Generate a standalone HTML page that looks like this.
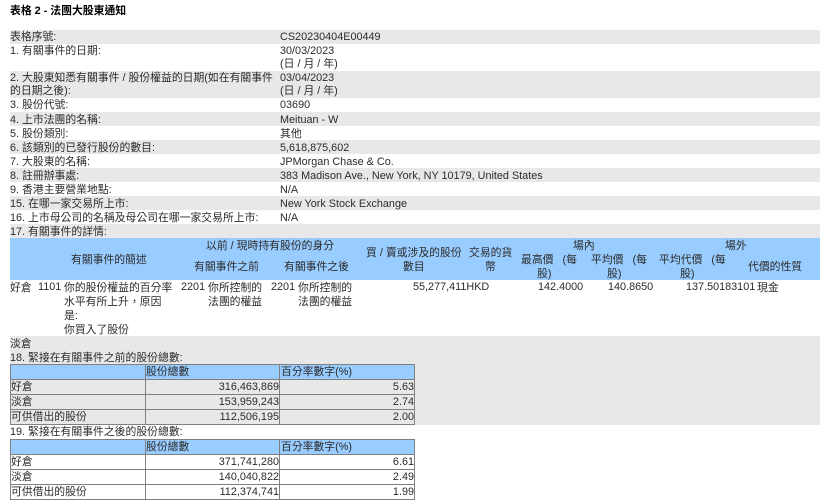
<!DOCTYPE html>
<html><head><meta charset="utf-8"><style>
html,body{margin:0;padding:0;background:#fff;width:827px;height:500px;overflow:hidden}
body{position:relative;font-family:"Liberation Sans","WenQuanYi Zen Hei","Noto Sans CJK TC",sans-serif;font-size:10.83px;color:#2b2b2b}
.t{position:absolute;white-space:nowrap;line-height:14px;height:14px}
.b{position:absolute;left:10px;width:810px}
.g{background:#e8e8e8}.bl{background:#99ccff}
.c{text-align:center}.r{text-align:right}
.l{position:absolute;background:#808080}
.w{word-spacing:6px}
</style></head><body>
<div class="t" style="left:10px;top:4px;font-weight:bold;color:#000">表格 2 - 法團大股東通知</div>

<div class="b g" style="top:30px;height:14px"></div>
<div class="b g" style="top:71px;height:27px"></div>
<div class="b g" style="top:112px;height:14px"></div>
<div class="b g" style="top:140px;height:14px"></div>
<div class="b g" style="top:168px;height:14px"></div>
<div class="b g" style="top:196px;height:14px"></div>
<div class="b g" style="top:224px;height:14px"></div>
<div class="b bl" style="top:238px;height:42px"></div>
<div class="b g" style="top:336px;height:89px"></div>

<div class="t" style="left:10px;top:30px">表格序號:</div><div class="t" style="left:280px;top:30px">CS20230404E00449</div>
<div class="t" style="left:10px;top:44px">1. 有關事件的日期:</div><div class="t" style="left:280px;top:44px">30/03/2023</div>
<div class="t" style="left:280px;top:57px">(日 / 月 / 年)</div>
<div class="t" style="left:10px;top:71px">2. 大股東知悉有關事件 / 股份權益的日期(如在有關事件</div><div class="t" style="left:280px;top:71px">03/04/2023</div>
<div class="t" style="left:10px;top:84px">的日期之後):</div><div class="t" style="left:280px;top:84px">(日 / 月 / 年)</div>
<div class="t" style="left:10px;top:98px">3. 股份代號:</div><div class="t" style="left:280px;top:98px">03690</div>
<div class="t" style="left:10px;top:113px">4. 上市法團的名稱:</div><div class="t" style="left:280px;top:113px">Meituan - W</div>
<div class="t" style="left:10px;top:127px">5. 股份類別:</div><div class="t" style="left:280px;top:127px">其他</div>
<div class="t" style="left:10px;top:141px">6. 該類別的已發行股份的數目:</div><div class="t" style="left:280px;top:141px">5,618,875,602</div>
<div class="t" style="left:10px;top:155px">7. 大股東的名稱:</div><div class="t" style="left:280px;top:155px">JPMorgan Chase &amp; Co.</div>
<div class="t" style="left:10px;top:169px">8. 註冊辦事處:</div><div class="t" style="left:280px;top:169px">383 Madison Ave., New York, NY 10179, United States</div>
<div class="t" style="left:10px;top:183px">9. 香港主要營業地點:</div><div class="t" style="left:280px;top:183px">N/A</div>
<div class="t" style="left:10px;top:197px">15. 在哪一家交易所上市:</div><div class="t" style="left:280px;top:197px">New York Stock Exchange</div>
<div class="t" style="left:10px;top:211px">16. 上市母公司的名稱及母公司在哪一家交易所上市:</div><div class="t" style="left:280px;top:211px">N/A</div>
<div class="t" style="left:10px;top:225px">17. 有關事件的詳情:</div>

<div class="t" style="left:206px;top:239px">以前 / 現時持有股份的身分</div>
<div class="t" style="left:71px;top:253px">有關事件的簡述</div>
<div class="t" style="left:194px;top:260px">有關事件之前</div>
<div class="t" style="left:284px;top:260px">有關事件之後</div>
<div class="t" style="left:366px;top:246px">買 / 賣或涉及的股份</div>
<div class="t" style="left:403px;top:260px">數目</div>
<div class="t" style="left:469px;top:246px">交易的貨</div>
<div class="t" style="left:485px;top:260px">幣</div>
<div class="t" style="left:573px;top:239px">場內</div>
<div class="t w" style="left:521px;top:253px">最高價 (每</div><div class="t" style="left:537px;top:267px">股)</div>
<div class="t w" style="left:591px;top:253px">平均價 (每</div><div class="t" style="left:607px;top:267px">股)</div>
<div class="t w" style="left:659px;top:253px">平均代價 (每</div><div class="t" style="left:680px;top:267px">股)</div>
<div class="t" style="left:725px;top:239px">場外</div>
<div class="t" style="left:748px;top:260px">代價的性質</div>

<div class="t" style="left:10px;top:281px">好倉</div>
<div class="t" style="left:38px;top:280px">1101</div>
<div class="t" style="left:64px;top:281px">你的股份權益的百分率</div>
<div class="t" style="left:64px;top:295px">水平有所上升，原因</div>
<div class="t" style="left:64px;top:309px">是:</div>
<div class="t" style="left:64px;top:323px">你買入了股份</div>
<div class="t" style="left:181px;top:280px">2201</div>
<div class="t" style="left:208px;top:281px">你所控制的</div>
<div class="t" style="left:208px;top:295px">法團的權益</div>
<div class="t" style="left:271px;top:280px">2201</div>
<div class="t" style="left:298px;top:281px">你所控制的</div>
<div class="t" style="left:298px;top:295px">法團的權益</div>
<div class="t" style="left:413px;top:280px">55,277,411HKD</div>
<div class="t" style="left:538px;top:280px">142.4000</div>
<div class="t" style="left:608px;top:280px">140.8650</div>
<div class="t" style="left:686px;top:280px">137.50183101</div>
<div class="t" style="left:757px;top:281px">現金</div>

<div class="t" style="left:10px;top:337px">淡倉</div>
<div class="t" style="left:10px;top:351px">18. 緊接在有關事件之前的股份總數:</div>

<div class="bl" style="position:absolute;left:10px;top:364px;width:405px;height:15px"></div>
<div class="l" style="left:10px;top:364px;width:405px;height:1px"></div>
<div class="l" style="left:10px;top:379px;width:405px;height:1px"></div>
<div class="l" style="left:10px;top:394px;width:405px;height:1px"></div>
<div class="l" style="left:10px;top:409px;width:405px;height:1px"></div>
<div class="l" style="left:10px;top:424px;width:405px;height:1px"></div>
<div class="l" style="left:10px;top:364px;width:1px;height:61px"></div>
<div class="l" style="left:145px;top:364px;width:1px;height:61px"></div>
<div class="l" style="left:279px;top:364px;width:1px;height:61px"></div>
<div class="l" style="left:414px;top:364px;width:1px;height:61px"></div>
<div class="t" style="left:146px;top:365px">股份總數</div>
<div class="t" style="left:281px;top:365px">百分率數字(%)</div>
<div class="t" style="left:11px;top:380px">好倉</div>
<div class="t r" style="left:146px;width:133px;top:380px">316,463,869</div>
<div class="t r" style="left:280px;width:134px;top:380px">5.63</div>
<div class="t" style="left:11px;top:395px">淡倉</div>
<div class="t r" style="left:146px;width:133px;top:395px">153,959,243</div>
<div class="t r" style="left:280px;width:134px;top:395px">2.74</div>
<div class="t" style="left:11px;top:410px">可供借出的股份</div>
<div class="t r" style="left:146px;width:133px;top:410px">112,506,195</div>
<div class="t r" style="left:280px;width:134px;top:410px">2.00</div>

<div class="t" style="left:10px;top:425px">19. 緊接在有關事件之後的股份總數:</div>

<div class="bl" style="position:absolute;left:10px;top:439px;width:405px;height:15px"></div>
<div class="l" style="left:10px;top:439px;width:405px;height:1px"></div>
<div class="l" style="left:10px;top:454px;width:405px;height:1px"></div>
<div class="l" style="left:10px;top:469px;width:405px;height:1px"></div>
<div class="l" style="left:10px;top:484px;width:405px;height:1px"></div>
<div class="l" style="left:10px;top:499px;width:405px;height:1px"></div>
<div class="l" style="left:10px;top:439px;width:1px;height:61px"></div>
<div class="l" style="left:145px;top:439px;width:1px;height:61px"></div>
<div class="l" style="left:279px;top:439px;width:1px;height:61px"></div>
<div class="l" style="left:414px;top:439px;width:1px;height:61px"></div>
<div class="t" style="left:146px;top:440px">股份總數</div>
<div class="t" style="left:281px;top:440px">百分率數字(%)</div>
<div class="t" style="left:11px;top:455px">好倉</div>
<div class="t r" style="left:146px;width:133px;top:455px">371,741,280</div>
<div class="t r" style="left:280px;width:134px;top:455px">6.61</div>
<div class="t" style="left:11px;top:470px">淡倉</div>
<div class="t r" style="left:146px;width:133px;top:470px">140,040,822</div>
<div class="t r" style="left:280px;width:134px;top:470px">2.49</div>
<div class="t" style="left:11px;top:485px">可供借出的股份</div>
<div class="t r" style="left:146px;width:133px;top:485px">112,374,741</div>
<div class="t r" style="left:280px;width:134px;top:485px">1.99</div>
</body></html>
